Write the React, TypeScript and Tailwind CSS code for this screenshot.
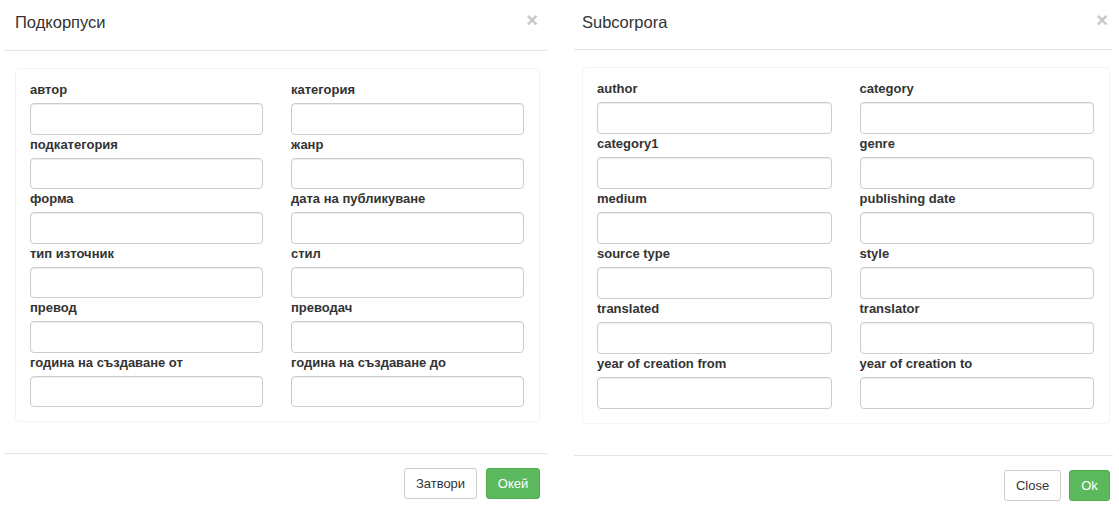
import React from "react"

interface PanelConfig {
  title: string
  fields: string[]
  close: string
  ok: string
  wrap: string
  header: string
  well: string
  input: string
  footer: string
  closeBtn: string
  okBtn: string
}

const font = { fontFamily: '"Liberation Sans", Arial, Helvetica, sans-serif' }

const left: PanelConfig = {
  title: "Подкорпуси",
  fields: [
    "автор",
    "категория",
    "подкатегория",
    "жанр",
    "форма",
    "дата на публикуване",
    "тип източник",
    "стил",
    "превод",
    "преводач",
    "година на създаване от",
    "година на създаване до",
  ],
  close: "Затвори",
  ok: "Окей",
  wrap: "w-[560px] pl-[4px]",
  header: "h-[51px] w-[543px] pl-[11px] pr-[9px]",
  well: "mt-[17px] ml-[11px] w-[525px] pt-[11px] pb-[14px] pl-[14px] pr-[15px]",
  input: "h-[31.5px]",
  footer: "mt-[31px] w-[543px] pr-[7px] gap-[9px]",
  closeBtn: "w-[73px]",
  okBtn: "w-[54px]",
}

const right: PanelConfig = {
  title: "Subcorpora",
  fields: [
    "author",
    "category",
    "category1",
    "genre",
    "medium",
    "publishing date",
    "source type",
    "style",
    "translated",
    "translator",
    "year of creation from",
    "year of creation to",
  ],
  close: "Close",
  ok: "Ok",
  wrap: "w-[559px] pl-[14px]",
  header: "h-[50px] w-[539px] pl-[8px] pr-[5px]",
  well: "mt-[17px] ml-[8px] w-[528px] pt-[11px] pb-[14px] pl-[14px] pr-[15px]",
  input: "h-[32px]",
  footer: "mt-[31px] w-[539px] pr-[3px] gap-[8px]",
  closeBtn: "w-[57px]",
  okBtn: "w-[41px]",
}

function Panel({ cfg }: { cfg: PanelConfig }) {
  return (
    <div className={`${cfg.wrap} shrink-0`}>
      {/* header */}
      <div className={`${cfg.header} flex items-center justify-between border-b border-[#e5e5e5] pb-[6px]`}>
        <h4 className="text-[16.5px] leading-[22px] text-[#333]">{cfg.title}</h4>
        <span className="text-[20px] font-bold leading-none text-[#c8c8c8] -mt-[4px]">×</span>
      </div>

      {/* body */}
      <div className={`${cfg.well} border border-[#f4f4f4] rounded-[4px]`}>
        <div className="grid grid-cols-2 gap-x-[28px]">
          {cfg.fields.map((f) => (
            <div key={f}>
              <label className="block text-[13px] font-bold leading-[20px] text-[#333] mb-[3px]">{f}</label>
              <input
                type="text"
                className={`${cfg.input} block w-full rounded-[4px] border border-[#ccc] bg-white shadow-[inset_0_1px_1px_rgba(0,0,0,0.075)] outline-none`}
              />
            </div>
          ))}
        </div>
      </div>

      {/* footer */}
      <div className={`${cfg.footer} flex justify-end border-t border-[#e5e5e5] pt-[14px]`}>
        <button
          className={`${cfg.closeBtn} h-[31px] rounded-[3px] border border-[#ccc] bg-white text-[13px] text-[#333]`}
        >
          {cfg.close}
        </button>
        <button
          className={`${cfg.okBtn} h-[31px] rounded-[3px] border border-[#4cae4c] bg-[#5cb85c] text-[13px] text-white`}
        >
          {cfg.ok}
        </button>
      </div>
    </div>
  )
}

export default function App() {
  return (
    <div className="flex w-[1119px] h-[510px] overflow-hidden bg-white" style={font}>
      <Panel cfg={left} />
      <Panel cfg={right} />
    </div>
  )
}
